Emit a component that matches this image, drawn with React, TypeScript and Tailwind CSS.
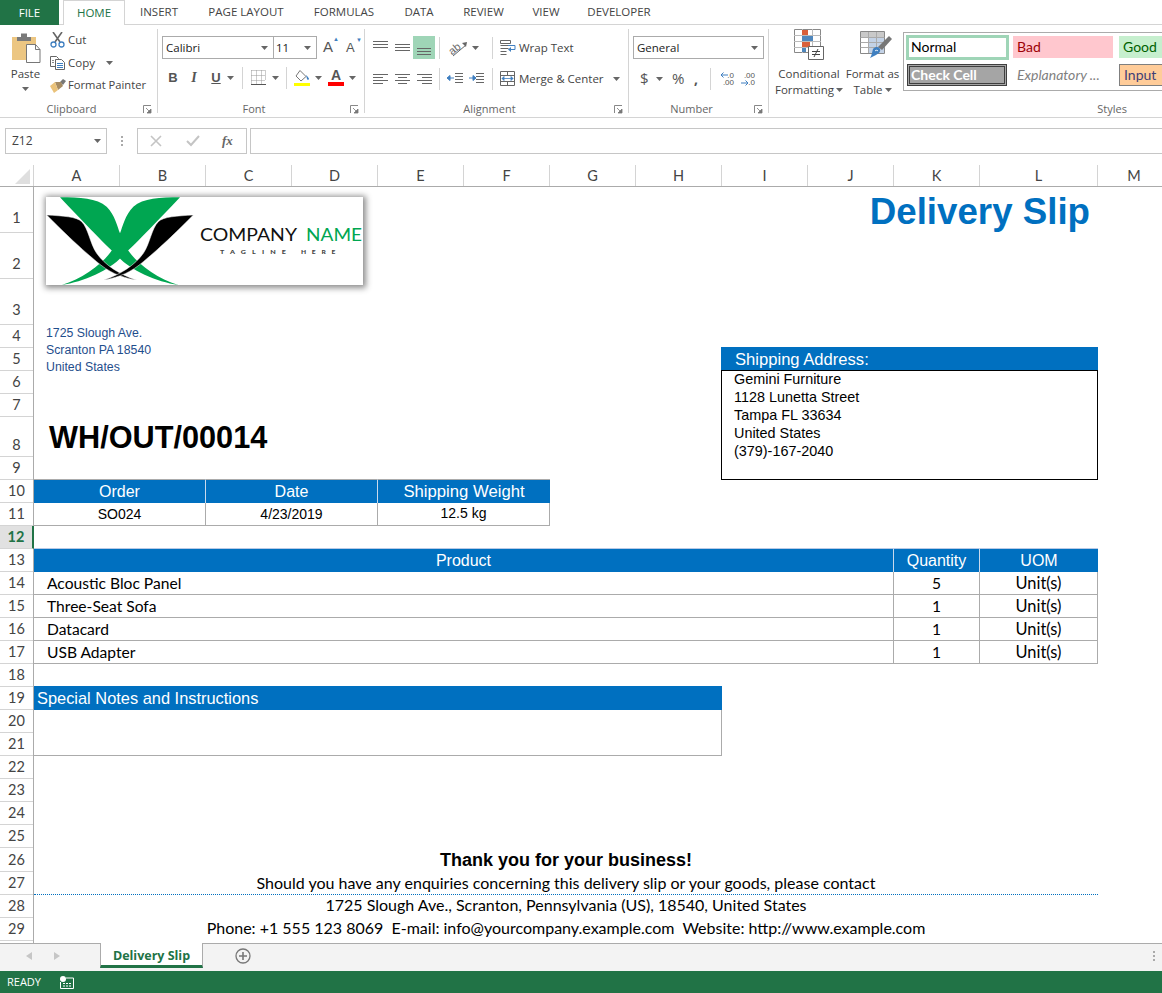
import React from "react";

const ui = "font-['Open_Sans',sans-serif]";
const arial = "font-['Liberation_Sans',Arial,sans-serif]";
const cal = "font-['Lato',sans-serif]";
const blue = "bg-[#0070c0]";

function Caret({ className = "" }: { className?: string }) {
  return (
    <svg width="7" height="4" viewBox="0 0 7 4" className={`shrink-0 ${className}`}>
      <path d="M0 0h7L3.500 4z" fill="#666" />
    </svg>
  );
}

function Launcher() {
  return (
    <svg width="9" height="9" viewBox="0 0 9 9" className="shrink-0">
      <path d="M0.500 8V0.500H8" fill="none" stroke="#888" />
      <path d="M3 3l4 4M8 4v4H4z" fill="#777" stroke="#777" strokeWidth="0.800" />
    </svg>
  );
}

function Lines({ rows, w = 16, h = 14, color = "#666" }: { rows: number[][]; w?: number; h?: number; color?: string }) {
  return (
    <svg width={w} height={h} viewBox={`0 0 ${w} ${h}`} className="shrink-0">
      {rows.map((r, i) => (
        <path key={i} d={`M${r[0]} ${r[2] + 0.5}H${r[1]}`} stroke={color} />
      ))}
    </svg>
  );
}

function Paste() {
  return (
    <svg width="31" height="31" viewBox="0 0 31 31" className="shrink-0">
      <path d="M2 5h24v23H2z" fill="#ecc682" />
      <path d="M7 5h14v4H7z" fill="#7a7a7a" />
      <path d="M11 1.500h6v4h-6z" fill="#7a7a7a" />
      <path d="M16.500 12.500h9l4.500 5v13h-13.500z" fill="#fff" stroke="#777" />
      <path d="M25.500 12.500v5h4.500" fill="none" stroke="#777" />
    </svg>
  );
}

function Scissors() {
  return (
    <svg width="15" height="16" viewBox="0 0 15 16" className="shrink-0">
      <path d="M3 0l7 10M12 0L5 10" stroke="#666" strokeWidth="1.600" fill="none" />
      <circle cx="3.500" cy="12.500" r="2.500" fill="none" stroke="#3f7fc0" strokeWidth="1.300" />
      <circle cx="11.500" cy="12.500" r="2.500" fill="none" stroke="#3f7fc0" strokeWidth="1.300" />
    </svg>
  );
}

function CopyIcon() {
  return (
    <svg width="15" height="14" viewBox="0 0 15 14" className="shrink-0">
      <path d="M.5.500h6l2 2v8H.5z" fill="#fff" stroke="#666" />
      <path d="M5.500 3.500h6l3 3v7h-9z" fill="#fff" stroke="#666" />
      <path d="M7 7.500h6M7 9.500h6M7 11.500h6" stroke="#3f7fc0" />
      <path d="M2 4.500h2M2 6.500h2" stroke="#888" />
    </svg>
  );
}

function Brush() {
  return (
    <svg width="16" height="14" viewBox="0 0 16 14" className="shrink-0">
      <path d="M10 3l3-3 3 2-3 4z" fill="#777" />
      <path d="M5 3l6 0 2 4-5 4z" fill="#a58b63" />
      <path d="M0 7l5-4 3 8-4 3z" fill="#eac27a" />
    </svg>
  );
}

function GridBorder() {
  return (
    <svg width="15" height="15" viewBox="0 0 15 15" className="shrink-0">
      <path d="M.5.500h14M.5 5.500h14M.5 10.500h14M.5.500v14M5.500.500v14M10.500.500v14M14.500.500v10" stroke="#999" strokeDasharray="1 1" fill="none" />
      <path d="M0 14.500h15" stroke="#555" />
    </svg>
  );
}

function FillIcon() {
  return (
    <svg width="16" height="16" viewBox="0 0 16 16" className="shrink-0">
      <path d="M6 0.500l6 6-5 4.500-5-5z" fill="#fff" stroke="#777" />
      <path d="M12 5c2 2 3 3 3 4 0 1-2 1-2 0z" fill="#3f7fc0" />
      <path d="M0 13h16v3H0z" fill="#ffff00" />
    </svg>
  );
}

function FontColor() {
  return (
    <div className={`${arial} flex flex-col items-center w-[16px] h-[17px] text-[#555] text-[14px] font-bold leading-[13px]`}>
      <span>A</span>
      <span className="block w-[16px] h-[4px] bg-[#ff0000]" />
    </div>
  );
}

function Orientation() {
  return (
    <svg width="23" height="18" viewBox="0 0 23 18" className="shrink-0">
      <text x="1" y="13" fontSize="11" fill="#666" transform="rotate(-38 8 9)" fontFamily="Liberation Sans">ab</text>
      <path d="M6 17L19 6" stroke="#666" />
      <path d="M15 4l5-1-1 5z" fill="#666" />
    </svg>
  );
}

function Indent({ flip = false }: { flip?: boolean }) {
  return (
    <svg width="16" height="11" viewBox="0 0 16 11" className="shrink-0">
      <path d="M8 .5h8M8 3.500h8M8 6.500h8M8 9.500h8" stroke="#666" transform={flip ? "translate(-1 0)" : ""} />
      {flip ? (
        <path d="M0 5h4V2.500L7 5 4 7.500V5" fill="#3f7fc0" stroke="#3f7fc0" />
      ) : (
        <path d="M7 5H3V2.500L0 5l3 2.500V5" fill="#3f7fc0" stroke="#3f7fc0" />
      )}
    </svg>
  );
}

function WrapIcon() {
  return (
    <svg width="16" height="15" viewBox="0 0 16 15" className="shrink-0">
      <path d="M.5.500h10v3H.5zM.5 5.500h8M.5 8.500h8M.5 11.500h6M.5 14.500h6" fill="none" stroke="#666" />
      <path d="M8 5.500h7v4H11" fill="none" stroke="#3f7fc0" />
      <path d="M8 9.500l3-2.500v5z" fill="#3f7fc0" />
    </svg>
  );
}

function MergeIcon() {
  return (
    <svg width="15" height="15" viewBox="0 0 15 15" className="shrink-0">
      <path d="M.5.500h14v14H.5zM.5 4.500h14M.5 10.500h14M7.500.500v4M7.500 10.500v4" fill="none" stroke="#666" />
      <path d="M2 7.500h11M2 7.500l2-2v4zM13 7.500l-2-2v4z" fill="#3f7fc0" stroke="#3f7fc0" strokeWidth="0.800" />
    </svg>
  );
}

function Decimal({ inc = false }: { inc?: boolean }) {
  return (
    <div className={`${arial} relative w-[14px] h-[14px] text-[8px] leading-[7px] text-[#555] text-right`}>
      <div>{inc ? ".00" : ".0"}</div>
      <div>{inc ? ".0" : ".00"}</div>
      <svg width="8" height="6" viewBox="0 0 8 6" className={inc ? "absolute left-0 bottom-0" : "absolute left-0 top-0"}>
        <path d={inc ? "M0 3h7M7 3L4.500 .5M7 3L4.500 5.500" : "M8 3H1M1 3l2.500-2.500M1 3l2.500 2.500"} stroke="#3f7fc0" fill="none" />
      </svg>
    </div>
  );
}

function CFIcon() {
  return (
    <svg width="31" height="31" viewBox="0 0 31 31" className="shrink-0">
      <path d="M.5.500h26v23H.5z" fill="#fff" stroke="#888" />
      <path d="M8.500 0v24M18.500 0v24M0 6.500h27M0 12.500h27M0 18.500h27" stroke="#bbb" />
      <path d="M8 1h6v5H8z" fill="#d9603b" />
      <path d="M8 7h11v5H8z" fill="#4f87bd" />
      <path d="M8 13h8v5H8z" fill="#d9603b" />
      <path d="M8 19h4v4H8z" fill="#4f87bd" />
      <path d="M14.500 17.500h15v13h-15z" fill="#fff" stroke="#666" />
      <path d="M18 22.500h8M18 25.500h8M24 20l-4 8" stroke="#444" fill="none" />
    </svg>
  );
}

function FTIcon() {
  return (
    <svg width="32" height="31" viewBox="0 0 32 31" className="shrink-0 ml-[6px]">
      <path d="M.5 2.500h24v22H.5z" fill="#fff" stroke="#888" />
      <path d="M1 3h23v5H1z" fill="#c9c9c9" />
      <path d="M8 8h16v16H8z" fill="#c3d2e6" />
      <path d="M.5 8.500h24M.5 13.500h24M.5 18.500h24M8.500 3v21M16.500 3v21" stroke="#aaa" fill="none" />
      <path d="M18 18L29 7l3 3-10 11z" fill="#777" />
      <path d="M13 20c3-3 6-2 7 0 1 3-2 5-4 6-2 1-4 2-6 3 2-3 2-6 3-9z" fill="#3f7fc0" />
      <path d="M15 22c1-1 2-1 3 0" stroke="#fff" fill="none" />
    </svg>
  );
}

function Group({ w, label, launcher = true, labelClass = "flex-1 text-center", children }: { w: string; label: string; launcher?: boolean; labelClass?: string; children: React.ReactNode }) {
  return (
    <div className={`${w} shrink-0 h-[84px] mt-[4px] flex flex-col`}>
      <div className="h-[73px] shrink-0">{children}</div>
      <div className="h-[15px] shrink-0 flex items-center text-[11px] text-[#666]">
        <span className={labelClass}>{label}</span>
        {launcher && <span className="mr-[5px] flex"><Launcher /></span>}
      </div>
    </div>
  );
}

const VSep = ({ h = "h-[22px]" }: { h?: string }) => <span className={`w-px ${h} bg-[#d4d4d4] shrink-0`} />;

function Ribbon() {
  return (
    <div className={`${ui} flex h-[93px] border-b border-[#d4d4d4] text-[#444] text-[11.5px] overflow-hidden`}>
      <Group w="w-[158px] border-r border-[#d4d4d4]" label="Clipboard">
        <div className="flex pl-[10px]">
          <div className="flex flex-col items-center w-[31px] pt-[3px]">
            <Paste />
            <span className="text-[11.5px] leading-[16px] mt-[3px]">Paste</span>
            <Caret className="mt-[5px]" />
          </div>
          <div className="flex flex-col ml-[9px] mt-[-1px]">
            <div className="flex items-center h-[23px]"><span className="w-[18px]"><Scissors /></span>Cut</div>
            <div className="flex items-center h-[23px]"><span className="w-[18px]"><CopyIcon /></span>Copy<Caret className="ml-[11px]" /></div>
            <div className="flex items-center h-[23px] whitespace-nowrap text-[11.2px]"><span className="w-[18px]"><Brush /></span>Format Painter</div>
          </div>
        </div>
      </Group>

      <Group w="w-[207px] border-r border-[#d4d4d4]" label="Font">
        <div className="flex items-center pl-[4px] pt-[7px]">
          <div className="w-[112px] h-[23px] border border-[#ababab] flex items-center justify-between pl-[3px] pr-[5px] text-[11.5px] text-[#222]">Calibri<Caret /></div>
          <div className="w-[44px] h-[23px] -ml-px border border-[#ababab] flex items-center justify-between pl-[2px] pr-[5px] text-[11.5px] text-[#222]">11<Caret /></div>
          <span className={`${arial} ml-[6px] text-[15px] text-[#555] relative w-[16px]`}>A<span className="absolute right-0 top-[-1px] text-[6px] text-[#3f7fc0]">▲</span></span>
          <span className={`${arial} ml-[7px] text-[13px] text-[#555] relative w-[16px]`}>A<span className="absolute right-0 top-[-2px] text-[6px] text-[#3f7fc0]">▼</span></span>
        </div>
        <div className="flex items-center h-[23px] mt-[7px] pl-[9px]">
          <span className={`${arial} w-[12px] font-bold text-[13px] text-[#555] text-center`}>B</span>
          <span className="ml-[9px] w-[12px] font-['Liberation_Serif',serif] italic font-bold text-[14px] text-[#555] text-center">I</span>
          <span className={`${arial} ml-[10px] w-[12px] font-bold text-[13px] text-[#555] text-center underline`}>U</span>
          <Caret className="ml-[5px]" />
          <span className="w-[8px]" /><VSep />
          <span className="w-[8px]" /><GridBorder />
          <Caret className="ml-[6px]" />
          <span className="w-[7px]" /><VSep />
          <span className="w-[7px]" /><FillIcon />
          <Caret className="ml-[5px]" />
          <span className="w-[6px]" /><FontColor />
          <Caret className="ml-[5px]" />
        </div>
      </Group>

      <Group w="w-[264px] border-r border-[#d4d4d4]" label="Alignment">
        <div className="flex items-center h-[23px] mt-[7px] pl-[8px]">
          <span className="w-[22px] h-[23px] flex items-start pt-[4px]"><Lines rows={[[0, 15, 1], [0, 15, 4], [0, 15, 7]]} h={8} /></span>
          <span className="w-[18px] h-[23px] flex items-center"><Lines rows={[[0, 15, 0], [0, 15, 3], [0, 15, 6]]} h={8} /></span>
          <span className="w-[22px] h-[23px] flex items-end pb-[3px] pl-[4px] bg-[#9fd5b7]"><Lines rows={[[0, 14, 0], [0, 14, 3], [0, 14, 6]]} h={8} /></span>
          <span className="w-[4px]" /><VSep />
          <span className="w-[7px]" /><Orientation /><Caret className="ml-[2px]" />
          <span className="w-[13px]" /><VSep />
          <span className="w-[7px]" /><WrapIcon />
          <span className="ml-[3px] whitespace-nowrap">Wrap Text</span>
        </div>
        <div className="flex items-center h-[23px] mt-[8px] pl-[8px]">
          <span className="w-[22px]"><Lines rows={[[0, 15, 0], [0, 10, 3], [0, 15, 6], [0, 10, 9]]} h={10} /></span>
          <span className="w-[22px]"><Lines rows={[[0, 15, 0], [3, 12, 3], [0, 15, 6], [3, 12, 9]]} h={10} /></span>
          <span className="w-[22px]"><Lines rows={[[0, 15, 0], [5, 15, 3], [0, 15, 6], [5, 15, 9]]} h={10} /></span>
          <VSep />
          <span className="w-[7px]" /><Indent /><span className="w-[6px]" /><Indent flip />
          <span className="w-[7px]" /><VSep />
          <span className="w-[7px]" /><MergeIcon />
          <span className="ml-[4px] whitespace-nowrap">Merge &amp; Center</span><Caret className="ml-[9px]" />
        </div>
      </Group>

      <Group w="w-[140px] border-r border-[#d4d4d4]" label="Number">
        <div className="ml-[4px] mt-[7px] w-[131px] h-[23px] border border-[#ababab] flex items-center justify-between pl-[3px] pr-[5px] text-[#222]">General<Caret /></div>
        <div className="flex items-center h-[23px] mt-[8px] pl-[11px]">
          <span className="w-[11px] text-[15px] text-[#555]">$</span><Caret className="ml-[5px]" />
          <span className="ml-[9px] w-[13px] text-[15px] text-[#555]">%</span>
          <span className="ml-[9px] w-[7px] text-[14px] font-bold text-[#555] leading-[14px]">,</span>
          <span className="w-[9px]" /><VSep />
          <span className="w-[9px]" /><Decimal /><span className="w-[7px]" /><Decimal inc />
        </div>
      </Group>

      <Group w="flex-1 min-w-0" label="Styles" launcher={false} labelClass="ml-auto mr-[35px]">
        <div className="flex">
          <div className="ml-[6px] w-[68px] shrink-0 flex flex-col items-center leading-[16px] text-[11.5px]">
            <CFIcon />
            <span className="mt-[6px] whitespace-nowrap">Conditional</span>
            <span className="whitespace-nowrap flex items-center gap-[2px]">Formatting<Caret /></span>
          </div>
          <div className="ml-[1px] w-[57px] shrink-0 flex flex-col items-center leading-[16px] text-[11.5px]">
            <FTIcon />
            <span className="mt-[6px] whitespace-nowrap">Format as</span>
            <span className="whitespace-nowrap flex items-center gap-[2px]">Table<Caret /></span>
          </div>
          <div className={`${cal} ml-[2px] mt-[3px] w-[260px] h-[59px] border border-[#ababab] overflow-hidden text-[14px] shrink-0`}>
            <div className="flex items-start mt-[2px] ml-[2px]">
              <div className="w-[103px] h-[25px] shrink-0 border-[3px] border-[#9fd5b7] flex items-center pl-[2px] pb-[2px] text-black">Normal</div>
              <div className="ml-[4px] mt-[1px] w-[100px] h-[22px] shrink-0 bg-[#ffc7ce] flex items-center pl-[4px] pb-[2px] text-[#9c0006]">Bad</div>
              <div className="ml-[6px] mt-[1px] w-[60px] h-[22px] shrink-0 bg-[#c6efce] flex items-center pl-[4px] pb-[2px] text-[#006100]">Good</div>
            </div>
            <div className="flex items-start mt-[4px] ml-[3px]">
              <div className="w-[100px] h-[22px] shrink-0 bg-[#a5a5a5] border-[3px] border-double border-[#3f3f3f] flex items-center pl-[1px] pb-[2px] text-white font-bold">Check Cell</div>
              <div className="w-[108px] h-[22px] shrink-0 flex items-center pl-[10px] pb-[2px] text-[#7f7f7f] italic whitespace-nowrap">Explanatory ...</div>
              <div className="ml-[4px] w-[60px] h-[22px] shrink-0 bg-[#ffcc99] border border-[#7f7f7f] flex items-center pl-[4px] pb-[2px] text-[#3f3f76]">Input</div>
            </div>
          </div>
        </div>
      </Group>
    </div>
  );
}

const TABS: [string, string][] = [
  ["INSERT", "w-[68px]"],
  ["PAGE LAYOUT", "w-[106px]"],
  ["FORMULAS", "w-[90px]"],
  ["DATA", "w-[60px]"],
  ["REVIEW", "w-[69px]"],
  ["VIEW", "w-[56px]"],
  ["DEVELOPER", "w-[90px]"],
];

function TabBar() {
  return (
    <div className={`${ui} flex h-[25px] border-b border-[#d4d4d4] text-[11.5px] text-[#444]`}>
      <div className="w-[59px] h-[25px] bg-[#217346] text-white flex items-center justify-center">FILE</div>
      <div className="ml-[4px] w-[62px] h-[25px] border border-b-0 border-[#d4d4d4] bg-white text-[#217346] flex items-center justify-center">HOME</div>
      {TABS.map(([t, w]) => (
        <div key={t} className={`${w} h-[24px] flex items-center justify-center whitespace-nowrap`}>{t}</div>
      ))}
    </div>
  );
}

function FormulaBar() {
  return (
    <div className={`${ui} flex h-[47px] pt-[10px] pl-[5px] text-[#444]`}>
      <div className="w-[102px] h-[26px] border border-[#c6c6c6] flex items-center justify-between pl-[6px] pr-[5px] text-[12px]">Z12<Caret /></div>
      <div className="w-[30px] h-[26px] flex flex-col items-center justify-center gap-[2px]">
        <span className="w-[2px] h-[2px] bg-[#aaa]" /><span className="w-[2px] h-[2px] bg-[#aaa]" /><span className="w-[2px] h-[2px] bg-[#aaa]" />
      </div>
      <div className="w-[110px] h-[26px] border border-[#c6c6c6] flex items-center">
        <svg width="12" height="12" viewBox="0 0 12 12" className="ml-[12px]"><path d="M1 1l10 10M11 1L1 11" stroke="#c4c4c4" strokeWidth="1.600" /></svg>
        <svg width="14" height="12" viewBox="0 0 14 12" className="ml-[24px]"><path d="M1 6l4 4 8-9" stroke="#c4c4c4" strokeWidth="2" fill="none" /></svg>
        <span className="ml-[22px] font-['Liberation_Serif',serif] italic font-bold text-[13px] text-[#666]">fx</span>
      </div>
      <div className="ml-[3px] flex-1 h-[26px] border border-[#c6c6c6] border-r-0" />
    </div>
  );
}

const COLS: [string, string][] = [
  ["A", "w-[86px]"], ["B", "w-[86px]"], ["C", "w-[86px]"], ["D", "w-[86px]"], ["E", "w-[86px]"], ["F", "w-[86px]"],
  ["G", "w-[86px]"], ["H", "w-[86px]"], ["I", "w-[86px]"], ["J", "w-[86px]"], ["K", "w-[86px]"], ["L", "w-[118px]"], ["M", "w-[72px]"],
];

function ColHeader() {
  return (
    <div className={`${cal} flex h-[22px] border-b border-[#ababab] text-[14.5px] text-[#444] overflow-hidden`}>
      <div className="w-[34px] h-[21px] shrink-0 flex items-end justify-end pb-[2px] pr-[3px] border-r border-[#d4d4d4]">
        <svg width="15" height="15" viewBox="0 0 15 15"><path d="M15 0v15H0z" fill="#dfdfdf" /></svg>
      </div>
      {COLS.map(([c, w]) => (
        <div key={c} className={`${w} h-[21px] shrink-0 flex items-center justify-center border-r border-[#d4d4d4] last:border-r-0`}>{c}</div>
      ))}
    </div>
  );
}

const ROWS: [number, string][] = [
  [1, "h-[46px] pb-[3px]"], [2, "h-[46px] pb-[3px]"], [3, "h-[46px] pb-[3px]"],
  ...[4, 5, 6, 7].map((n) => [n, "h-[23px]"] as [number, string]),
  [8, "h-[40px]"],
  ...[9, 10, 11, 12, 13, 14, 15, 16, 17, 18, 19, 20, 21, 22, 23, 24, 25].map((n) => [n, "h-[23px]"] as [number, string]),
  [26, "h-[24px]"],
  [27, "h-[23px]"], [28, "h-[23px]"], [29, "h-[23px]"],
];

function RowHeader() {
  return (
    <div className={`${cal} w-[34px] shrink-0 flex flex-col border-r border-[#ababab] text-[14.5px] text-[#444]`}>
      {ROWS.map(([n, h]) =>
        n === 12 ? (
          <div key={n} className={`${h} -mr-px border-r-2 border-r-[#217346] bg-[#e1e1e1] border-b border-b-[#d4d4d4] flex items-end justify-center leading-[22px] font-bold text-[#217346]`}>{n}</div>
        ) : (
          <div key={n} className={`${h} border-b border-[#d4d4d4] flex items-end justify-center leading-[22px]`}>{n}</div>
        )
      )}
      <div className="h-[2px]" />
    </div>
  );
}

function Logo() {
  return (
    <div className="col-start-1 col-span-5 row-start-1 row-span-2 ml-[12px] mt-[10px] w-[317px] h-[88px] bg-white shadow-[1px_1px_6px_2px_rgba(0,0,0,0.45)]">
      <svg width="317" height="88" viewBox="48 21 951 264" className="block">
        <path d="M90 22C150 22 200 25 230 50C255 75 262 110 270 130C278 165 292 178 292 178C320 220 380 265 445 285C380 275 300 240 265 200C220 160 150 85 90 22Z" fill="#00a651" />
        <path d="M450 22C390 22 340 25 310 50C285 75 278 110 270 130C262 165 248 178 248 178C220 220 160 265 95 285C160 275 240 240 275 200C320 160 390 85 450 22Z" fill="#00a651" />
        <path d="M50 75C100 78 140 80 155 95C175 115 180 160 200 190C225 225 270 255 320 270C270 262 235 245 200 215C140 165 95 120 50 75Z" fill="#000" stroke="#fff" strokeWidth="1.500" />
        <path d="M490 75C440 78 400 80 385 95C365 115 360 160 340 190C315 225 270 255 220 270C270 262 305 245 340 215C400 165 445 120 490 75Z" fill="#000" stroke="#fff" strokeWidth="1.500" />
        <text x="510" y="153" fontSize="52" fontFamily="Lato" fill="#111" textLength="291" lengthAdjust="spacingAndGlyphs">COMPANY</text>
        <text x="828" y="153" fontSize="52" fontFamily="Lato" fill="#00a651" textLength="168" lengthAdjust="spacingAndGlyphs">NAME</text>
        <text x="570" y="192" fontSize="14" fontFamily="Lato" fontWeight="900" fill="#444" letterSpacing="12" textLength="216" lengthAdjust="spacingAndGlyphs">TAGLINE</text>
        <text x="813" y="192" fontSize="14" fontFamily="Lato" fontWeight="900" fill="#444" letterSpacing="12" textLength="120" lengthAdjust="spacingAndGlyphs">HERE</text>
      </svg>
    </div>
  );
}

const PRODUCTS: [string, string][] = [
  ["Acoustic Bloc Panel", "5"],
  ["Three-Seat Sofa", "1"],
  ["Datacard", "1"],
  ["USB Adapter", "1"],
];
const ROW_START = ["row-start-14", "row-start-15", "row-start-16", "row-start-17"];

const line = "border-[#ababab]";

function Sheet() {
  return (
    <div className="grid grid-cols-[repeat(11,86px)_118px_64px] grid-rows-[repeat(3,46px)_repeat(4,23px)_40px_repeat(17,23px)_24px_repeat(3,23px)_2px] text-black">
      <Logo />
      <div className={`${arial} col-start-8 col-span-5 row-start-1 row-span-2 pr-[8px] text-right text-[36.7px] leading-[50px] font-bold text-[#0070c0]`}>Delivery Slip</div>

      <div className={`${arial} col-start-1 col-span-4 row-start-4 row-span-3 pl-[12px] text-[12.3px] leading-[17px] text-[#1f4e8c]`}>
        <div>1725 Slough Ave.</div>
        <div>Scranton PA 18540</div>
        <div>United States</div>
      </div>

      <div className={`${arial} col-start-1 col-span-5 row-start-8 pl-[15px] pt-[2px] flex items-center text-[30.7px] font-bold`}>WH/OUT/00014</div>

      <div className={`${arial} col-start-9 col-span-4 row-start-5 row-span-5 -ml-px -mt-px flex flex-col`}>
        <div className={`${blue} h-[23px] shrink-0 pl-[14px] text-[16.6px] leading-[25px] text-white`}>Shipping Address:</div>
        <div className="flex-1 border border-black pl-[12px] text-[14.4px] leading-[18px]">
          <div className="-mt-px">Gemini Furniture</div>
          <div>1128 Lunetta Street</div>
          <div>Tampa FL 33634</div>
          <div>United States</div>
          <div>(379)-167-2040</div>
        </div>
      </div>

      {/* Order table */}
      <div className={`${arial} ${blue} col-start-1 col-span-2 row-start-10 -mt-px border-t ${line} border-r-[#c9d9ec] border-r flex items-center justify-center text-[16px] text-white`}>Order</div>
      <div className={`${arial} ${blue} col-start-3 col-span-2 row-start-10 -mt-px border-t ${line} border-r-[#c9d9ec] border-r flex items-center justify-center text-[16px] text-white`}>Date</div>
      <div className={`${arial} ${blue} col-start-5 col-span-2 row-start-10 -mt-px border-t ${line} flex items-center justify-center text-[16.7px] text-white`}>Shipping Weight</div>
      <div className={`${arial} col-start-1 col-span-2 row-start-11 border-r border-b ${line} flex items-center justify-center text-[14px]`}>SO024</div>
      <div className={`${arial} col-start-3 col-span-2 row-start-11 border-r border-b ${line} flex items-center justify-center text-[14px]`}>4/23/2019</div>
      <div className={`${arial} col-start-5 col-span-2 row-start-11 border-r border-b ${line} flex items-center justify-center text-[14px] pb-[2px]`}>12.5 kg</div>

      {/* Product table */}
      <div className={`${arial} ${blue} col-start-1 col-span-10 row-start-13 -mt-px border-t border-t-[#b7c9e6] border-r border-r-[#c9d9ec] flex items-center justify-center text-[16px] text-white`}>Product</div>
      <div className={`${arial} ${blue} col-start-11 row-start-13 -mt-px border-t border-t-[#b7c9e6] border-r border-r-[#c9d9ec] flex items-center justify-center text-[16px] text-white`}>Quantity</div>
      <div className={`${arial} ${blue} col-start-12 row-start-13 -mt-px border-t border-t-[#b7c9e6] flex items-center justify-center text-[16px] text-white`}>UOM</div>
      {PRODUCTS.map(([name, qty], i) => (
        <React.Fragment key={name}>
          <div className={`${cal} ${ROW_START[i]} col-start-1 col-span-10 border-r border-b ${line} flex items-center pl-[13px] pt-[1px] text-[15.6px]`}>{name}</div>
          <div className={`${cal} ${ROW_START[i]} col-start-11 border-r border-b ${line} flex items-center justify-center pt-[1px] text-[15.6px]`}>{qty}</div>
          <div className={`${cal} ${ROW_START[i]} col-start-12 border-r border-b ${line} flex items-center justify-center text-[16.4px]`}>Unit(s)</div>
        </React.Fragment>
      ))}

      {/* Notes */}
      <div className={`${arial} ${blue} col-start-1 col-span-8 row-start-19 -mt-px pl-[3px] flex items-center text-[16.4px] text-white`}>Special Notes and Instructions</div>
      <div className={`col-start-1 col-span-8 row-start-20 row-span-2 border-r border-b ${line}`} />

      {/* Footer */}
      <div className={`${arial} col-start-1 col-span-12 row-start-26 flex items-center justify-center text-[18px] font-bold`}>Thank you for your business!</div>
      <div className={`${cal} col-start-1 col-span-12 row-start-27 border-b border-dotted border-[#0070c0] flex items-center justify-center text-[16px] whitespace-nowrap`}>Should you have any enquiries concerning this delivery slip or your goods, please contact</div>
      <div className={`${cal} col-start-1 col-span-12 row-start-28 flex items-center justify-center pb-[3px] text-[16px] whitespace-nowrap`}>1725 Slough Ave., Scranton, Pennsylvania (US), 18540, United States</div>
      <div className={`${cal} col-start-1 col-span-12 row-start-29 flex items-center justify-center pb-[3px] text-[16px] whitespace-pre`}>Phone: +1 555 123 8069  E-mail: info@yourcompany.example.com  Website: http://www.example.com</div>
    </div>
  );
}

function SheetTabs() {
  return (
    <div className={`${ui} flex h-[28px] bg-[#f3f3f3] border-t border-[#ababab] items-start`}>
      <div className="w-[100px] flex items-center h-[24px] shrink-0">
        <svg width="6" height="8" viewBox="0 0 6 8" className="ml-[26px]"><path d="M6 0v8L0 4z" fill="#c6c6c6" /></svg>
        <svg width="6" height="8" viewBox="0 0 6 8" className="ml-[22px]"><path d="M0 0v8l6-4z" fill="#c6c6c6" /></svg>
      </div>
      <div className="-mt-px w-[103px] h-[25px] pt-[4px] bg-white border-x border-[#ababab] border-b-[3px] border-b-[#217346] flex items-center justify-center text-[12.5px] font-bold text-[#217346] whitespace-nowrap">Delivery Slip</div>
      <div className="ml-[32px] h-[24px] flex items-center">
        <svg width="16" height="16" viewBox="0 0 16 16"><circle cx="8" cy="8" r="7" fill="none" stroke="#777" strokeWidth="1.300" /><path d="M4 8h8M8 4v8" stroke="#777" strokeWidth="1.600" /></svg>
      </div>
      <div className="ml-auto mr-[7px] h-[24px] flex flex-col items-center justify-center gap-[2px]">
        <span className="w-[2px] h-[2px] bg-[#aaa]" /><span className="w-[2px] h-[2px] bg-[#aaa]" /><span className="w-[2px] h-[2px] bg-[#aaa]" />
      </div>
    </div>
  );
}

function StatusBar() {
  return (
    <div className={`${ui} flex items-center h-[22px] bg-[#217346] text-white text-[11px]`}>
      <span className="ml-[7px] pt-[1px]">READY</span>
      <svg width="14" height="13" viewBox="0 0 14 13" className="ml-[19px]">
        <circle cx="3" cy="3" r="3" fill="#fff" />
        <path d="M6 2h7.500v10.500H.5V6" fill="none" stroke="#fff" />
        <path d="M3 7h2v1H3zM6 7h2v1H6zM9 7h2v1H9zM3 9.500h2v1H3zM6 9.500h2v1H6zM9 9.500h2v1H9z" fill="#fff" />
      </svg>
    </div>
  );
}

export default function App() {
  return (
    <div className="w-[1162px] h-[993px] overflow-hidden bg-white flex flex-col">
      <TabBar />
      <Ribbon />
      <FormulaBar />
      <ColHeader />
      <div className="flex h-[756px] overflow-hidden">
        <RowHeader />
        <Sheet />
      </div>
      <SheetTabs />
      <StatusBar />
    </div>
  );
}
